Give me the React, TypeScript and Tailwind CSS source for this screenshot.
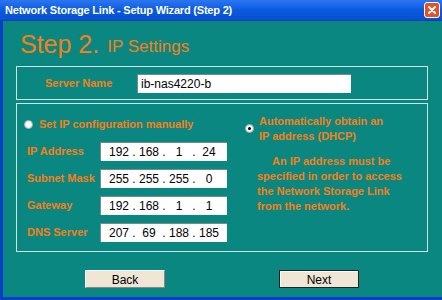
import React from "react";

const orange = "text-[#f57f17]";

function Radio({ checked }: { checked?: boolean }) {
  return (
    <span className="flex h-[9px] w-[9px] shrink-0 items-center justify-center rounded-full border border-[#9aa] bg-white">
      {checked && <span className="h-[3px] w-[3px] rounded-full bg-black" />}
    </span>
  );
}

function IpField({ parts }: { parts: string[] }) {
  return (
    <div className="flex h-[19px] w-[127px] items-center border-l border-t border-[#7a8a8a] bg-white pl-[7px] text-[12px] text-black" style={{ fontFamily: '"Liberation Sans", Arial, sans-serif' }}>
      {parts.map((p, i) => (
        <React.Fragment key={i}>
          <span className="w-[22px] text-center">{p}</span>
          {i < 3 && <span className="w-[8px] text-center">.</span>}
        </React.Fragment>
      ))}
    </div>
  );
}

export default function App() {
  const rows: [string, string[]][] = [
    ["IP Address", ["192", "168", "1", "24"]],
    ["Subnet Mask", ["255", "255", "255", "0"]],
    ["Gateway", ["192", "168", "1", "1"]],
    ["DNS Server", ["207", "69", "188", "185"]],
  ];
  return (
    <div className="flex h-[300px] w-[442px] flex-col overflow-hidden" style={{ fontFamily: '"Liberation Sans", Arial, sans-serif' }}>
      <div className="flex h-[21px] shrink-0 items-center justify-between border-b border-[#0a3fa8] bg-gradient-to-b from-[#2b76f0] via-[#0a5ae0] to-[#0b4fd0] pl-[5px] pr-[2px]">
        <span className="text-[11px] font-bold tracking-[-0.2px] text-white">Network Storage Link - Setup Wizard (Step 2)</span>
        <span className="flex h-[16px] w-[16px] items-center justify-center rounded-[3px] border border-white bg-[#e0542a]">
          <svg width="10" height="10" viewBox="0 0 10 10">
            <path d="M2 2 L8 8 M8 2 L2 8" stroke="white" strokeWidth="2" strokeLinecap="round" />
          </svg>
        </span>
      </div>
      <div className="flex flex-1 flex-col border-b-[3px] border-l-[3px] border-[#0a3fc8] bg-[#0b8781] pr-[14px] pl-[13px]">
        <div className={`flex h-[45px] shrink-0 items-end pb-[7px] pl-[4px] ${orange}`}>
          <span className="text-[25px] leading-[30px]">Step 2.</span>
          <span className="ml-[8px] mb-[2px] text-[17px] leading-[20px]">IP Settings</span>
        </div>
        <div className="flex h-[34px] shrink-0 items-center border border-[#cfe3e1] pl-[28px]">
          <span className={`w-[92px] text-[11px] font-bold ${orange}`}>Server Name</span>
          <div className="flex h-[19px] w-[214px] items-center border-l border-t border-[#7a8a8a] bg-white pl-[3px] text-[12px] text-black">ib-nas4220-b</div>
        </div>
        <div className="mt-[3px] flex h-[149px] shrink-0 border border-[#cfe3e1]">
          <div className="flex w-[226px] flex-col pt-[14px] pl-[7px]">
            <div className={`flex h-[12px] items-center gap-[6px] text-[11px] font-bold ${orange}`}>
              <Radio />
              <span>Set IP configuration manually</span>
            </div>
            <div className="mt-[12px] flex flex-col gap-[8px] pl-[3px]">
              {rows.map(([label, parts]) => (
                <div key={label} className="flex items-center">
                  <span className={`w-[73px] text-[11px] font-bold ${orange}`}>{label}</span>
                  <IpField parts={parts} />
                </div>
              ))}
            </div>
          </div>
          <div className={`flex flex-1 flex-col pt-[10px] pl-[2px] text-[11px] font-bold ${orange}`}>
            <div className="flex items-start gap-[5px]">
              <span className="mt-[10px]"><Radio checked /></span>
              <span className="leading-[15px]">Automatically obtain an<br />IP address (DHCP)</span>
            </div>
            <p className="mt-[10px] pl-[12px] leading-[15px]">
              <span className="pl-[15px]">An IP address must be</span><br />
              specified in order to access<br />
              the Network Storage Link<br />
              from the network.
            </p>
          </div>
        </div>
        <div className="mt-[18px] flex">
          <button className="ml-[69px] h-[18px] w-[80px] border border-[#888] border-t-white border-l-white bg-[#efe6d6] text-[12px] text-black">Back</button>
          <button className="ml-[114px] h-[18px] w-[80px] border border-[#222] bg-[#efe6d6] text-[12px] text-black shadow-[inset_1px_1px_0_#fff]">Next</button>
        </div>
      </div>
    </div>
  );
}
